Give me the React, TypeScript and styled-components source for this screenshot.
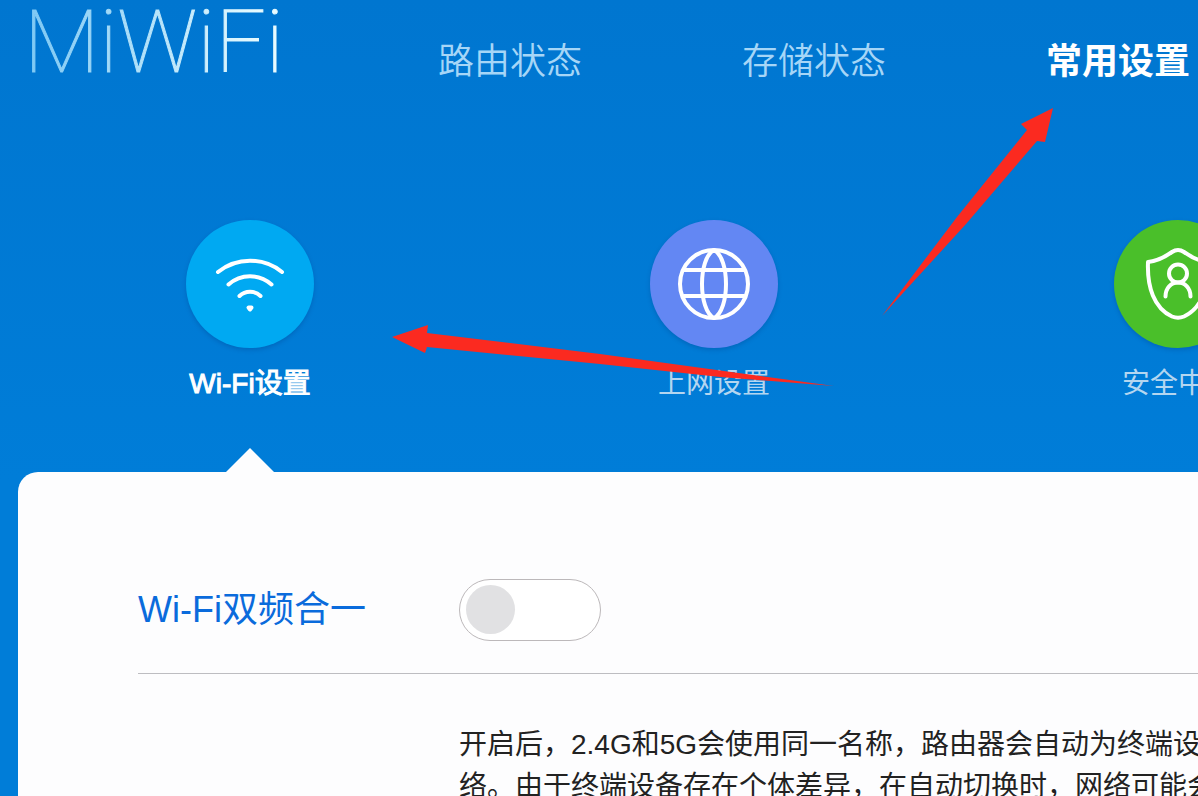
import React from "react";
import styled, { createGlobalStyle } from "styled-components";

const GlobalStyle = createGlobalStyle`
  *, *::before, *::after { box-sizing: border-box; }
  body {
    margin: 0;
    overflow: hidden;
    font-family: "Liberation Sans", "Noto Sans CJK SC", sans-serif;
    background: #007ad4;
  }
`;

const Page = styled.div`
  position: relative;
  display: flex;
  flex-direction: column;
  min-height: 100vh;
  overflow: hidden;
  background: linear-gradient(#0076d0, #007dd8 480px);
`;

const Header = styled.header`
  display: flex;
  align-items: center;
  height: 124px;
  padding-left: 24px;
`;

const Logo = styled.a`
  flex: none;
  width: 414px;
  margin-bottom: 40px;
  font-family: Roboto, sans-serif;
  font-size: 88px;
  font-weight: 100;
  line-height: 120px;
  text-decoration: none;
  color: transparent;
  -webkit-text-stroke: 1px transparent;
  background: linear-gradient(90deg, #7cc8f4, #e8fbff 240px);
  background-clip: text;
  -webkit-background-clip: text;
`;

const MainNav = styled.nav`
  display: flex;
  flex: none;
  gap: 160px;
`;

const NavLink = styled.a<{ $active?: boolean }>`
  font-size: 36px;
  line-height: 48px;
  white-space: nowrap;
  text-decoration: none;
  font-weight: ${(p) => (p.$active ? 700 : 350)};
  color: ${(p) => (p.$active ? "#ffffff" : "#a6d6f7")};
`;

const Categories = styled.nav`
  display: flex;
  gap: 304px;
  padding: 96px 0 0 170px;
`;

const Category = styled.a<{ $active?: boolean }>`
  position: relative;
  display: flex;
  flex: none;
  flex-direction: column;
  align-items: center;
  gap: 16px;
  width: 160px;
  height: 252px;
  font-size: 28px;
  line-height: 40px;
  text-decoration: none;
  white-space: nowrap;
  color: ${(p) => (p.$active ? "#ffffff" : "#b4d6f0")};
  -webkit-text-stroke: ${(p) => (p.$active ? "1px #ffffff" : "0")};
`;

const Disc = styled.span<{ $color: string }>`
  display: block;
  width: 128px;
  height: 128px;
  border-radius: 50%;
  background: ${(p) => p.$color};
  box-shadow: 0 2px 4px rgba(0, 50, 120, 0.25);
`;

const Icon = styled.svg`
  display: block;
  width: 128px;
  height: 128px;
  fill: none;
  stroke: #ffffff;
  stroke-width: 4;
  stroke-linecap: round;
  stroke-linejoin: round;
`;

const Pointer = styled.span`
  width: 48px;
  height: 24px;
  margin-top: auto;
  background: #fdfdfe;
  clip-path: polygon(50% 0, 100% 100%, 0 100%);
`;

const Panel = styled.main`
  flex: 1;
  margin-left: 18px;
  padding: 74px 0 0 120px;
  border-radius: 20px 0 0 0;
  background: #fdfdfe;
`;

const SettingRow = styled.div`
  display: flex;
  align-items: center;
  height: 128px;
  border-bottom: 1px solid #bdbdc1;
`;

const SettingLabel = styled.label`
  width: 321px;
  font-size: 36px;
  line-height: 48px;
  color: #0a6bdc;
`;

const Switch = styled.input`
  appearance: none;
  display: flex;
  align-items: center;
  width: 142px;
  height: 62px;
  margin: 0;
  padding: 0 6px;
  border: 1px solid #bcb8ba;
  border-radius: 31px;
  background: #ffffff;
  cursor: pointer;

  &::before {
    content: "";
    width: 49px;
    height: 49px;
    border-radius: 50%;
    background: #e1e1e3;
  }

  &:checked {
    justify-content: flex-end;
  }
`;

const Description = styled.p`
  margin: 0;
  padding: 50px 0 0 321px;
  height: 122px;
  overflow: hidden;
  font-size: 28px;
  line-height: 42px;
  white-space: nowrap;
  color: #222222;
`;

const Annotations = styled.svg`
  position: absolute;
  top: 0;
  left: 0;
  width: 1198px;
  height: 480px;
  pointer-events: none;
  fill: #fb2a20;
`;

const WifiIcon = () => (
  <Icon viewBox="0 0 128 128" aria-hidden="true">
    <path d="M32 52 A51 51 0 0 1 96 52" />
    <path d="M42.5 64.5 A32 32 0 0 1 85.5 64.5" />
    <path d="M53.5 76 A15 15 0 0 1 74.5 76" />
    <path d="M62.5 87.5 H65.5 L64 89.5 Z" />
  </Icon>
);

const GlobeIcon = () => (
  <Icon viewBox="0 0 128 128" aria-hidden="true">
    <circle cx="64" cy="64" r="34" />
    <path d="M64 30 C48 38 48 90 64 98 C80 90 80 38 64 30 Z" />
    <path d="M34 50 H94 M34 76 H94" />
  </Icon>
);

const ShieldIcon = () => (
  <Icon viewBox="0 0 128 128" aria-hidden="true">
    <path d="M64 30 Q61 30 58 32 C51 37 44 41 34 42 C33 67 40 88 58 96.5 Q64 99 70 96.5 C88 88 95 67 94 42 C84 41 77 37 70 32 Q67 30 64 30 Z" />
    <circle cx="64" cy="53.5" r="9" />
    <path d="M51.5 76.5 C51.5 68 57 62.5 64 62.5 C71 62.5 76.5 68 76.5 76.5" />
  </Icon>
);

export default function App() {
  return (
    <>
      <GlobalStyle />
      <Page>
        <Header>
          <Logo href="#home">MiWiFi</Logo>
          <MainNav>
            <NavLink href="#status">路由状态</NavLink>
            <NavLink href="#storage">存储状态</NavLink>
            <NavLink href="#settings" $active aria-current="page">常用设置</NavLink>
          </MainNav>
        </Header>

        <Categories>
          <Category href="#wifi" $active aria-current="page">
            <Disc $color="#00a9f2"><WifiIcon /></Disc>
            Wi-Fi设置
            <Pointer />
          </Category>
          <Category href="#network">
            <Disc $color="#6387f3"><GlobeIcon /></Disc>
            上网设置
          </Category>
          <Category href="#security">
            <Disc $color="#4abf2a"><ShieldIcon /></Disc>
            安全中心
          </Category>
        </Categories>

        <Panel>
          <SettingRow>
            <SettingLabel htmlFor="dual-band">Wi-Fi双频合一</SettingLabel>
            <Switch id="dual-band" type="checkbox" role="switch" />
          </SettingRow>
          <Description>
            开启后，2.4G和5G会使用同一名称，路由器会自动为终端设
            <br />
            络。由于终端设备存在个体差异，在自动切换时，网络可能会
          </Description>
        </Panel>

        <Annotations viewBox="0 0 1198 480" aria-hidden="true">
          <path d="M1053 108 L1045 142 L1037 141 L966 224 L882 316 L957 217 L1027 130 L1021 124 Z" />
          <path d="M392 337 L428 325 L427 333 L600 354 L834 386 L720 377 L600 364 L427 347 L425 353 Z" />
        </Annotations>
      </Page>
    </>
  );
}
